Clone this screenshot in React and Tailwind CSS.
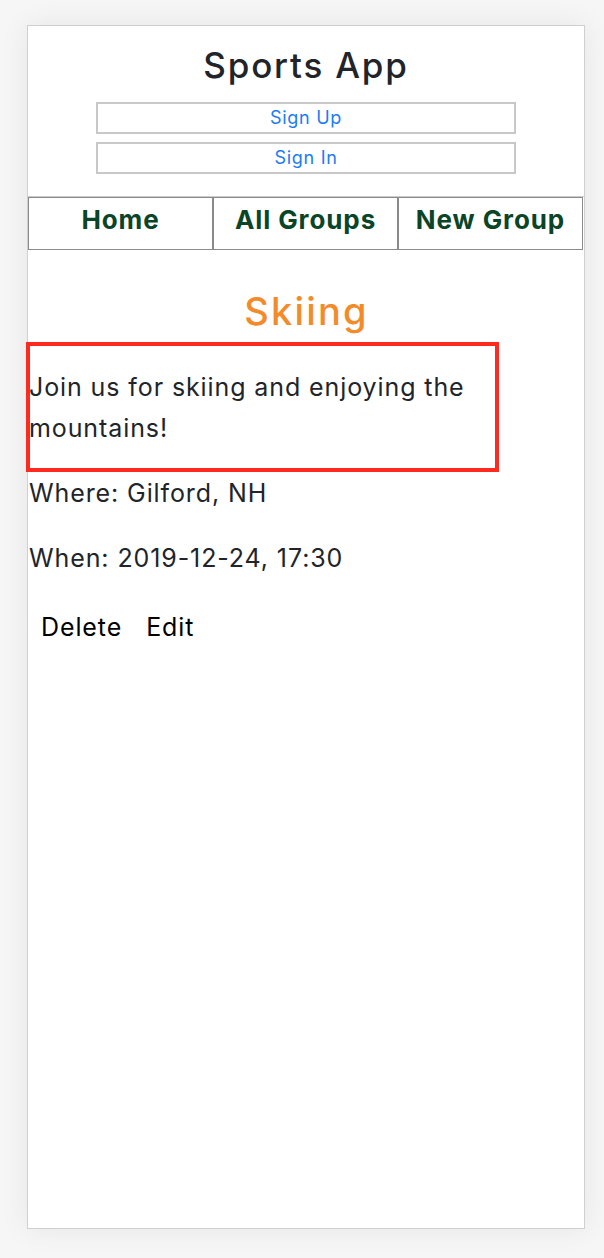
import React from 'react';

const navItems = ['Home', 'All Groups', 'New Group'];

export default function App() {
  return (
    <div className="min-h-screen bg-[#f6f6f6] pt-[25px] pb-[29px] font-['Inter',sans-serif] text-[#212529]">
      {/* Frame */}
      <div className="ml-[27px] w-[558px] h-[1204px] bg-white border border-[#cfcfcf] shadow-[0_0_28px_rgba(0,0,0,0.07)]">
        {/* Header */}
        <header className="pt-[18px] flex flex-col items-center">
          <h1 className="text-[35px] leading-[42px] font-medium tracking-[1.8px]">Sports App</h1>
          <div className="mt-[16px] flex flex-col gap-[8px]">
            <button className="w-[420px] h-[32px] border-2 border-[#c8c8c8] bg-white text-[#1a7cf5] text-[18px] leading-[26px] tracking-[0.7px]">
              Sign Up
            </button>
            <button className="w-[420px] h-[32px] border-2 border-[#c8c8c8] bg-white text-[#1a7cf5] text-[18px] leading-[26px] tracking-[0.7px]">
              Sign In
            </button>
          </div>
        </header>

        {/* Nav */}
        <nav className="mt-[22px] border-t border-[#cccccc]">
          <div className="w-[555px] grid grid-cols-3">
            {navItems.map((item) => (
              <a
                key={item}
                href="#"
                className="h-[53px] border border-[#8a8a8a] pt-[6px] text-center text-[26px] leading-[32px] font-bold tracking-[0.9px] text-[#0b4528]"
              >
                {item}
              </a>
            ))}
          </div>
        </nav>

        {/* Group details */}
        <main className="pl-[1px]">
          <h2 className="mt-[38px] text-center text-[38px] leading-[46px] font-medium tracking-[2.2px] text-[#f38b2b]">Skiing</h2>

          <div className="relative mt-[33px]">
            <p className="text-[25px] leading-[41px] tracking-[0.9px]">Join us for skiing and enjoying the mountains!</p>
            {/* highlight */}
            <div className="absolute top-[-25px] left-[-3px] w-[473px] h-[130px] border-4 border-[#ff2a1f]"></div>
          </div>

          <p className="mt-[24px] text-[25px] leading-[41px] tracking-[0.9px]">Where: Gilford, NH</p>
          <p className="mt-[24px] text-[25px] leading-[41px] tracking-[0.9px]">When: 2019-12-24, 17:30</p>

          <div className="mt-[33px] flex">
            <button className="px-[12px] text-[25px] leading-[30px] tracking-[0.9px] text-black">Delete</button>
            <button className="px-[12px] text-[25px] leading-[30px] tracking-[0.9px] text-black">Edit</button>
          </div>
        </main>
      </div>
    </div>
  );
}
